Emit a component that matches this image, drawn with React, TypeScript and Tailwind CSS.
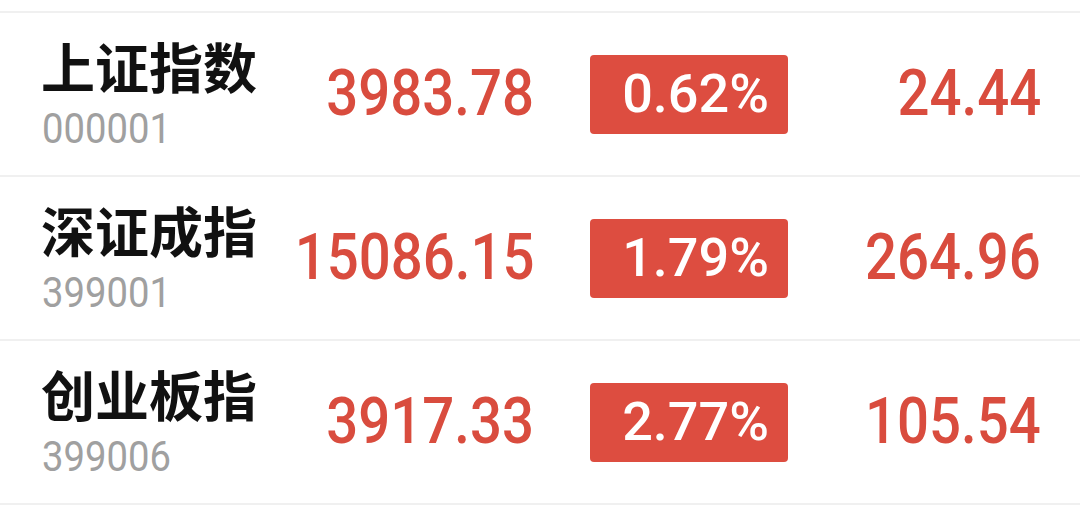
import React from "react";

const rows = [
  { name: "上证指数", code: "000001", price: "3983.78", pct: "0.62%", chg: "24.44" },
  { name: "深证成指", code: "399001", price: "15086.15", pct: "1.79%", chg: "264.96" },
  { name: "创业板指", code: "399006", price: "3917.33", pct: "2.77%", chg: "105.54" },
];

const num = { fontFamily: "Roboto, 'DejaVu Sans', sans-serif" } as React.CSSProperties;
const cjk = { fontFamily: "'Noto Sans CJK SC', 'Noto Sans', sans-serif" } as React.CSSProperties;

export default function App() {
  return (
    <div className="w-[1080px] h-[505px] bg-white pt-[11px] overflow-hidden">
      {rows.map((r, i) => (
        <div
          key={r.code}
          className={
            "flex items-center border-t-2 border-[#f0f0f0] pl-[41px] pr-[39px] " +
            (i === rows.length - 1 ? "border-b-2 h-[166px]" : "h-[164px]")
          }
        >
          <div className="w-[249px] flex flex-col items-start">
            <div style={cjk} className="text-[54px] font-bold leading-[54px] text-[#111111]">
              {r.name}
            </div>
            <div style={num} className="mt-[15px] text-[42px] leading-[42px] text-[#a0a0a0] origin-left scale-x-[0.91] ml-[1px]">
              {r.code}
            </div>
          </div>
          <div className="w-[244px] flex justify-end">
            <span style={num} className="inline-block text-[64px] font-medium leading-none text-[#d94c3e] origin-right scale-x-[0.88]">
              {r.price}
            </span>
          </div>
          <div className="ml-[56px] w-[198px] h-[79px] rounded-[4px] bg-[#dd4d40] flex items-center justify-end pr-[19px]">
            <span style={num} className="inline-block text-[54px] font-medium leading-none text-white origin-right scale-x-[1.0]">
              {r.pct}
            </span>
          </div>
          <div className="flex-1 flex justify-end">
            <span style={num} className="inline-block text-[64px] font-medium leading-none text-[#d94c3e] origin-right scale-x-[0.88]">
              {r.chg}
            </span>
          </div>
        </div>
      ))}
    </div>
  );
}
